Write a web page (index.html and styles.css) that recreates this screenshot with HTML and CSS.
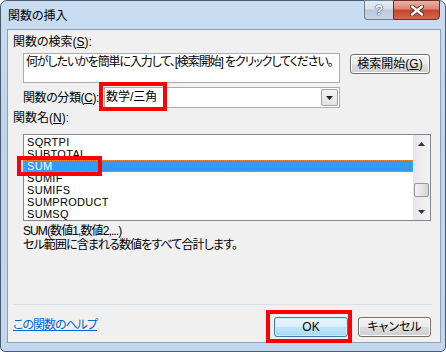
FILE: index.html
```html
<!DOCTYPE html>
<html lang="ja">

<head>
    <meta charset="UTF-8">
    <title>関数の挿入</title>
    <link rel="stylesheet" href="styles.css">
</head>

<body>
    <div class="window">
        <!-- Title bar -->
        <div class="titlebar">
            <span class="title">関数の挿入</span>
            <div class="caption-buttons">
                <div class="cap-help">?</div>
                <div class="cap-close">
                    <svg width="14" height="11" viewBox="0 0 14 11">
                        <path d="M2 1.5 L12 9.5 M12 1.5 L2 9.5" stroke="#5a2a22" stroke-width="4.2" stroke-linecap="round"/>
                        <path d="M2 1.5 L12 9.5 M12 1.5 L2 9.5" stroke="#ffffff" stroke-width="2.4" stroke-linecap="round"/>
                    </svg>
                </div>
            </div>
        </div>

        <div class="client">
            <!-- Search -->
            <div class="label">関数の検索(<u>S</u>):</div>
            <div class="search-row">
                <div class="search-box">何がしたいかを簡単に入力して、[検索開始] をクリックしてください。</div>
                <button class="btn btn-search">検索開始(<u>G</u>)</button>
            </div>

            <!-- Category -->
            <div class="category-row">
                <span class="category-label">関数の分類(<u>C</u>):</span>
                <div class="select">
                    <span class="select-value">数学/三角</span>
                    <span class="select-arrow">
                        <svg width="7" height="4" viewBox="0 0 7 4"><path d="M0 0 H7 L3.5 4 Z" fill="#222"/></svg>
                    </span>
                </div>
            </div>

            <!-- Function list -->
            <div class="label list-label">関数名(<u>N</u>):</div>
            <div class="listbox">
                <div class="list-items">
                    <div class="row">SQRTPI</div>
                    <div class="row">SUBTOTAL</div>
                    <div class="row selected">SUM</div>
                    <div class="row">SUMIF</div>
                    <div class="row">SUMIFS</div>
                    <div class="row">SUMPRODUCT</div>
                    <div class="row">SUMSQ</div>
                </div>
                <div class="scrollbar">
                    <div class="scroll-btn">
                        <svg width="7" height="4" viewBox="0 0 7 4"><path d="M0 4 H7 L3.5 0 Z" fill="#333"/></svg>
                    </div>
                    <div class="scroll-space"></div>
                    <div class="scroll-thumb"></div>
                    <div class="scroll-rest"></div>
                    <div class="scroll-btn">
                        <svg width="7" height="4" viewBox="0 0 7 4"><path d="M0 0 H7 L3.5 4 Z" fill="#333"/></svg>
                    </div>
                </div>
            </div>

            <!-- Description -->
            <div class="desc desc-first">SUM(数値1,数値2,...)</div>
            <div class="desc">セル範囲に含まれる数値をすべて合計します。</div>

            <div class="separator"></div>

            <!-- Footer -->
            <div class="footer">
                <a class="help-link" href="#">この関数のヘルプ</a>
                <button class="btn btn-default btn-ok">OK</button>
                <button class="btn btn-cancel">キャンセル</button>
            </div>

            <!-- Red annotation boxes -->
            <div class="mark mark-category"></div>
            <div class="mark mark-sum"></div>
            <div class="mark mark-ok"></div>
        </div>
    </div>
</body>

</html>
```

FILE: styles.css
```css
* {
    box-sizing: border-box;
}

body {
    margin: 0;
    background: #ffffff;
    font-family: "Liberation Sans", "Noto Sans CJK JP", sans-serif;
    font-size: 12px;
    font-feature-settings: "palt";
    color: #000;
}

u {
    text-decoration-thickness: 1px;
    text-underline-offset: 1px;
}

/* Window frame */
.window {
    width: 446px;
    height: 352px;
    border: 1px solid #4a5b70;
    border-radius: 7px 7px 5px 5px;
    background: linear-gradient(to bottom, #c9ddf2, #bcd3ec 40%, #c3d8ef);
    padding: 0 4px 8px 6px;
    display: flex;
    flex-direction: column;
}

.titlebar {
    height: 28px;
    display: flex;
    justify-content: space-between;
    align-items: flex-start;
}

.title {
    margin-top: 8px;
    margin-left: 1px;
    line-height: 14px;
    color: #000;
}

.caption-buttons {
    display: flex;
    margin-top: -1px;
    margin-right: 1px;
}

.cap-help,
.cap-close {
    height: 20px;
    display: flex;
    align-items: center;
    justify-content: center;
}

.cap-help {
    width: 29px;
    border: 1px solid #6e7f94;
    border-right: none;
    border-radius: 0 0 0 4px;
    background: linear-gradient(to bottom, #e6edf5, #d3dfeb 45%, #b9c9da 50%, #c9d7e6);
    color: #f6f8fa;
    font-weight: bold;
    font-size: 14px;
    text-shadow: 0 0 1px #34465c, 0 0 1px #34465c, 0 0 1px #34465c;
}

.cap-close {
    width: 47px;
    border: 1px solid #6a2f25;
    border-radius: 0 0 4px 0;
    background: linear-gradient(to bottom, #eab2a6, #dc8472 45%, #c8432b 50%, #d2674f);
}

/* Client area */
.client {
    flex: 1;
    position: relative;
    background: #f0f0f0;
    border: 1px solid #8da0b6;
    padding: 0 8px 0 5px;
}

.label {
    margin-top: 5px;
    line-height: 14px;
}

.search-row {
    display: flex;
    align-items: flex-start;
    margin-top: 4px;
    padding-left: 10px;
}

.search-box {
    width: 317px;
    height: 30px;
    border: 1px solid #abadb3;
    background: #fff;
    padding: 1px 2px;
    line-height: 14px;
    white-space: nowrap;
    overflow: hidden;
    letter-spacing: -1.1px;
}

.btn {
    font: inherit;
    font-feature-settings: "palt";
    height: 20px;
    padding: 0;
    line-height: 18px;
    color: #000;
    border: 1px solid #707070;
    border-radius: 3px;
    background: linear-gradient(to bottom, #f2f2f2 0%, #ebebeb 50%, #dddddd 51%, #cfcfcf 100%);
    box-shadow: inset 0 0 0 1px #fbfbfb;
}

.btn-search {
    width: 80px;
    margin-top: 1px;
    margin-left: 10px;
}

.category-row {
    display: flex;
    align-items: center;
    margin-top: 4px;
    padding-left: 10px;
    height: 21px;
}

.category-label {
    width: 81px;
    line-height: 14px;
    letter-spacing: -0.4px;
}

.select {
    width: 236px;
    height: 21px;
    border: 1px solid #abadb3;
    background: #fff;
    display: flex;
}

.select-value {
    flex: 1;
    padding-left: 1px;
    line-height: 19px;
}

.select-arrow {
    width: 17px;
    margin: 1px;
    border: 1px solid #a4a4a4;
    border-radius: 2px;
    background: linear-gradient(to bottom, #f4f4f4, #e2e2e2);
    display: flex;
    align-items: center;
    justify-content: center;
}

.list-label {
    margin-top: 3px;
}

.listbox {
    display: flex;
    margin: 9px 0 0 10px;
    width: 408px;
    height: 87px;
    border: 1px solid #828790;
    background: #fff;
}

.list-items {
    flex: 1;
    padding-top: 1px;
}

.row {
    height: 12px;
    line-height: 12px;
    padding-left: 3px;
    font-size: 11px;
    letter-spacing: 0.3px;
}

.row.selected {
    background: #3399ff;
    color: #fff;
    outline: 1px dotted #e8892d;
    outline-offset: -1px;
}

.scrollbar {
    width: 17px;
    display: flex;
    flex-direction: column;
    background: linear-gradient(to right, #e6e6e6, #f4f4f4);
}

.scroll-btn {
    height: 17px;
    display: flex;
    align-items: center;
    justify-content: center;
}

.scroll-space {
    height: 31px;
}

.scroll-thumb {
    height: 14px;
    margin: 0 1px;
    border: 1px solid #979797;
    border-radius: 2px;
    background: linear-gradient(to right, #f3f3f3, #e4e4e4 50%, #d6d6d6);
}

.scroll-rest {
    flex: 1;
}

.desc {
    margin-left: 10px;
    line-height: 14px;
    letter-spacing: -0.9px;
}

.desc-first {
    margin-top: 3px;
}

.separator {
    margin-top: 52px;
    height: 1px;
    background: #d6dfe6;
}

.footer {
    display: flex;
    align-items: flex-start;
    margin-top: 12px;
    padding-right: 1px;
}

.help-link {
    flex: 1;
    margin-top: 1px;
    line-height: 14px;
    color: #0066cc;
    text-decoration: underline;
    letter-spacing: -1px;
}

.btn-ok {
    width: 74px;
}

.btn-default {
    border-color: #3c7fb1;
    background: linear-gradient(to bottom, #eaf6fd 0%, #d9f0fc 50%, #bee6fd 51%, #a7d9f5 100%);
    box-shadow: inset 0 0 0 1px #c8ecfd;
}

.btn-cancel {
    width: 73px;
    margin-left: 10px;
}

/* Red annotation boxes */
.mark {
    position: absolute;
    border: 4px solid #ff0000;
}

.mark-category {
    left: 91px;
    top: 52px;
    width: 68px;
    height: 29px;
}

.mark-sum {
    left: 9px;
    top: 126px;
    width: 85px;
    height: 20px;
}

.mark-ok {
    left: 258px;
    top: 280px;
    width: 86px;
    height: 33px;
}
```
